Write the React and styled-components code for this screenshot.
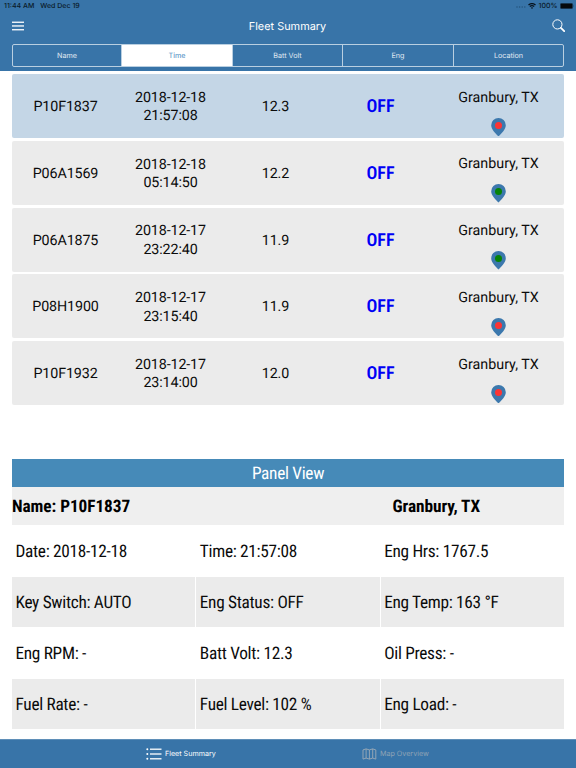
import React from "react";
import styled, { createGlobalStyle } from "styled-components";

const BLUE = "#3874a8";

const GlobalStyle = createGlobalStyle`
  *, *::before, *::after { box-sizing: border-box; }
  body {
    margin: 0;
    background: #fff;
    font-family: Roboto, "Liberation Sans", sans-serif;
    color: #0b0b0b;
    text-rendering: geometricPrecision;
  }
`;

const Screen = styled.div`
  width: 576px;
  height: 768px;
  display: flex;
  flex-direction: column;
  overflow: hidden;
  background: #fff;
`;

const Header = styled.header`
  height: 71px;
  flex: none;
  background: ${BLUE};
`;

const StatusBar = styled.div`
  height: 12px;
  display: flex;
  align-items: center;
  padding: 0 1px 0 4px;
  font: 500 7px/12px Inter, sans-serif;
  color: #0a1a28;
`;

const StatusDate = styled.span`
  margin-left: 6px;
  margin-right: auto;
`;

const NavBar = styled.div`
  height: 32px;
  display: grid;
  grid-template-columns: 60px 1fr 60px;
  align-items: center;
  padding: 0 11px 5px 12px;
  color: #fff;
  svg { display: block; }
`;

const Title = styled.h1`
  margin: 0 2px 0 0;
  text-align: center;
  font: 400 10.9px/16px Inter, sans-serif;
`;

const SearchSlot = styled.div`
  display: flex;
  justify-content: flex-end;
`;

const Segments = styled.div`
  height: 23px;
  margin: 0 12px;
  display: grid;
  grid-template-columns: 108px 111px 110px 111px 1fr;
  border: 1px solid #b9cfe1;
  border-radius: 2px;
  overflow: hidden;
`;

const Segment = styled.div`
  display: flex;
  align-items: center;
  justify-content: center;
  border-left: ${(p) => (p.$first ? "0" : "1px solid #b9cfe1")};
  background: ${(p) => (p.$active ? "#fff" : "transparent")};
  color: ${(p) => (p.$active ? "#4a8abf" : "#e0eaf3")};
  font: 400 7.2px/10px Inter, sans-serif;
`;

const FleetList = styled.main`
  height: 388px;
  flex: none;
  padding: 3px 12px 0;
  display: flex;
  flex-direction: column;
  gap: 2.75px;
`;

const FleetRow = styled.div`
  height: 64px;
  flex: none;
  padding: 0 0 0 1px;
  display: grid;
  grid-template-columns: repeat(4, 105px) 1fr;
  align-items: center;
  text-align: center;
  border-radius: 2px;
  background: ${(p) => (p.$selected ? "#c4d6e6" : "#ebebeb")};
  font-size: 14.3px;
  line-height: 18.4px;
`;

const Cell = styled.span`
  padding-top: 2.6px;
  letter-spacing: -0.13px;
`;

const Status = styled(Cell)`
  color: #0000f5;
  font-weight: 600;
  font-size: 18px;
  font-stretch: 80%;
  letter-spacing: 0;
`;

const Place = styled.div`
  height: 64px;
  padding-top: 14.6px;
  display: flex;
  flex-direction: column;
  align-items: center;
  justify-content: space-between;
  padding-bottom: 2px;
  svg { display: block; }
`;

const Panel = styled.section`
  height: 280px;
  flex: none;
  margin: 0 12px;
  font-stretch: 75%;
  font-size: 17.3px;
  letter-spacing: -0.3px;
  color: #0b0b0b;
`;

const PanelTitle = styled.h2`
  margin: 0;
  height: 28px;
  text-align: center;
  background: #468ab8;
  color: #fff;
  font-weight: 400;
  font-size: 17.3px;
  line-height: 30px;
`;

const PanelHead = styled.div`
  height: 38px;
  display: grid;
  grid-template-columns: 380.5px 1fr;
  background: #efefef;
  color: #000;
  font-weight: 700;
  letter-spacing: -0.06px;
  line-height: 41px;
`;

const Readings = styled.div`
  display: grid;
  grid-template-columns: repeat(3, 1fr);
  grid-auto-rows: 51.1px;
  column-gap: 1px;
`;

const Reading = styled.div`
  height: 50.1px;
  margin-top: 0.8px;
  padding-left: 3.5px;
  line-height: 53px;
  white-space: nowrap;
  background: ${(p) => (p.$shaded ? "#ebebeb" : "#fff")};
`;

const TabBar = styled.nav`
  flex: 1;
  display: grid;
  grid-template-columns: 146px 216px 1fr;
  background: ${BLUE};
  border-top: 1px solid #5f8fb8;
`;

const Tab = styled.div`
  grid-column: ${(p) => p.$column};
  display: flex;
  align-items: center;
  gap: 3px;
  color: ${(p) => (p.$active ? "#fff" : "#8fa3b5")};
  font: 400 7.15px/10px Inter, sans-serif;
`;

const WifiIcon = () => (
  <svg width="8" height="6" viewBox="0 0 8 6" fill="none" stroke="#07131d" strokeWidth="1.3">
    <path d="M.5 2.1Q4-.9 7.5 2.1M1.8 3.6Q4 1.8 6.2 3.6" />
    <path d="M4 6 2.9 4.7Q4 3.8 5.1 4.7Z" fill="#07131d" stroke="none" />
  </svg>
);

const BatteryIcon = () => (
  <svg width="15" height="6" viewBox="0 0 15 6">
    <rect x=".3" y=".3" width="12.4" height="5.4" rx="1.3" fill="#05090d" stroke="#244e73" strokeWidth=".5" />
    <path d="M13.3 2Q14.3 3 13.3 4Z" fill="#193b59" />
  </svg>
);

const SignalDots = () => (
  <svg width="10" height="4" viewBox="0 0 10 4" fill="#24547c">
    {[1, 3.6, 6.2, 8.8].map((x) => <circle key={x} cx={x} cy="3" r=".75" />)}
  </svg>
);

const MenuIcon = () => (
  <svg width="12" height="10" viewBox="0 0 12 10" fill="#fff">
    <rect y="0.6" width="12" height="1.3" />
    <rect y="4.3" width="12" height="1.3" />
    <rect y="8.1" width="12" height="1.3" />
  </svg>
);

const SearchIcon = () => (
  <svg width="13" height="13" viewBox="0 0 13 13" fill="none" stroke="#fff">
    <circle cx="5.4" cy="5.4" r="4.6" strokeWidth="1" />
    <path d="m8.9 8.9 3.3 3.3" strokeWidth="1.8" strokeLinecap="round" />
  </svg>
);

const PinIcon = ({ color }) => (
  <svg width="15" height="18.5" viewBox="0 0 15 18.5">
    <path d="M7.5 0A7.3 7.3 0 0 0 .2 7.2C.2 11.7 5 15.6 7.5 18.5 10 15.6 14.8 11.7 14.8 7.2A7.3 7.3 0 0 0 7.5 0Z" fill="#3c78ad" />
    <circle cx="7.5" cy="7.5" r="3.5" fill={color} />
  </svg>
);

const ListIcon = () => (
  <svg width="16" height="12" viewBox="0 0 16 12" fill="#fff">
    {[1.2, 6, 10.8].map((y) => (
      <g key={y}>
        <circle cx="1.3" cy={y} r="1" />
        <rect x="4" y={y - 0.65} width="11.5" height="1.3" />
      </g>
    ))}
  </svg>
);

const MapIcon = () => (
  <svg width="15" height="12" viewBox="0 0 15 12" fill="none" stroke="#9caab7" strokeWidth=".9">
    <path d="M1 1.9 4.1.9 7.4 1.9 10.7.9 13.8 1.9V11.1L10.7 10.1 7.4 11.1 4.1 10.1 1 11.1ZM4.1.9V10.1M7.4 1.9V11.1M10.7.9V10.1" />
  </svg>
);

const RED = "#fc3434";
const GREEN = "#078307";

const vehicles = [
  { name: "P10F1837", date: "2018-12-18", time: "21:57:08", volt: "12.3", pin: RED },
  { name: "P06A1569", date: "2018-12-18", time: "05:14:50", volt: "12.2", pin: GREEN },
  { name: "P06A1875", date: "2018-12-17", time: "23:22:40", volt: "11.9", pin: GREEN },
  { name: "P08H1900", date: "2018-12-17", time: "23:15:40", volt: "11.9", pin: RED },
  { name: "P10F1932", date: "2018-12-17", time: "23:14:00", volt: "12.0", pin: RED },
];

const readings = [
  "Date: 2018-12-18", "Time: 21:57:08", "Eng Hrs: 1767.5",
  "Key Switch: AUTO", "Eng Status: OFF", "Eng Temp: 163 °F",
  "Eng RPM: -", "Batt Volt: 12.3", "Oil Press: -",
  "Fuel Rate: -", "Fuel Level: 102 %", "Eng Load: -",
];

const StatusIcons = styled.div`
  display: flex;
  align-items: center;
  gap: 2.5px;
`;

export default function App() {
  return (
    <Screen>
      <GlobalStyle />
      <Header>
        <StatusBar>
          <span>11:44 AM</span>
          <StatusDate>Wed Dec 19</StatusDate>
          <StatusIcons>
            <SignalDots />
            <WifiIcon />
            <span>100%</span>
            <BatteryIcon />
          </StatusIcons>
        </StatusBar>
        <NavBar>
          <MenuIcon />
          <Title>Fleet Summary</Title>
          <SearchSlot><SearchIcon /></SearchSlot>
        </NavBar>
        <Segments>
          {["Name", "Time", "Batt Volt", "Eng", "Location"].map((label, i) => (
            <Segment key={label} $first={i === 0} $active={i === 1}>{label}</Segment>
          ))}
        </Segments>
      </Header>
      <FleetList>
        {vehicles.map((v, i) => (
          <FleetRow key={v.name} $selected={i === 0}>
            <Cell>{v.name}</Cell>
            <Cell>{v.date}<br />{v.time}</Cell>
            <Cell>{v.volt}</Cell>
            <Status>OFF</Status>
            <Place>
              <span>Granbury, TX</span>
              <PinIcon color={v.pin} />
            </Place>
          </FleetRow>
        ))}
      </FleetList>
      <Panel>
        <PanelTitle>Panel View</PanelTitle>
        <PanelHead>
          <span>Name: P10F1837</span>
          <span>Granbury, TX</span>
        </PanelHead>
        <Readings>
          {readings.map((text, i) => (
            <Reading key={text} $shaded={Math.floor(i / 3) % 2 === 1}>{text}</Reading>
          ))}
        </Readings>
      </Panel>
      <TabBar>
        <Tab $column={2} $active><ListIcon />Fleet Summary</Tab>
        <Tab $column={3}><MapIcon />Map Overview</Tab>
      </TabBar>
    </Screen>
  );
}
